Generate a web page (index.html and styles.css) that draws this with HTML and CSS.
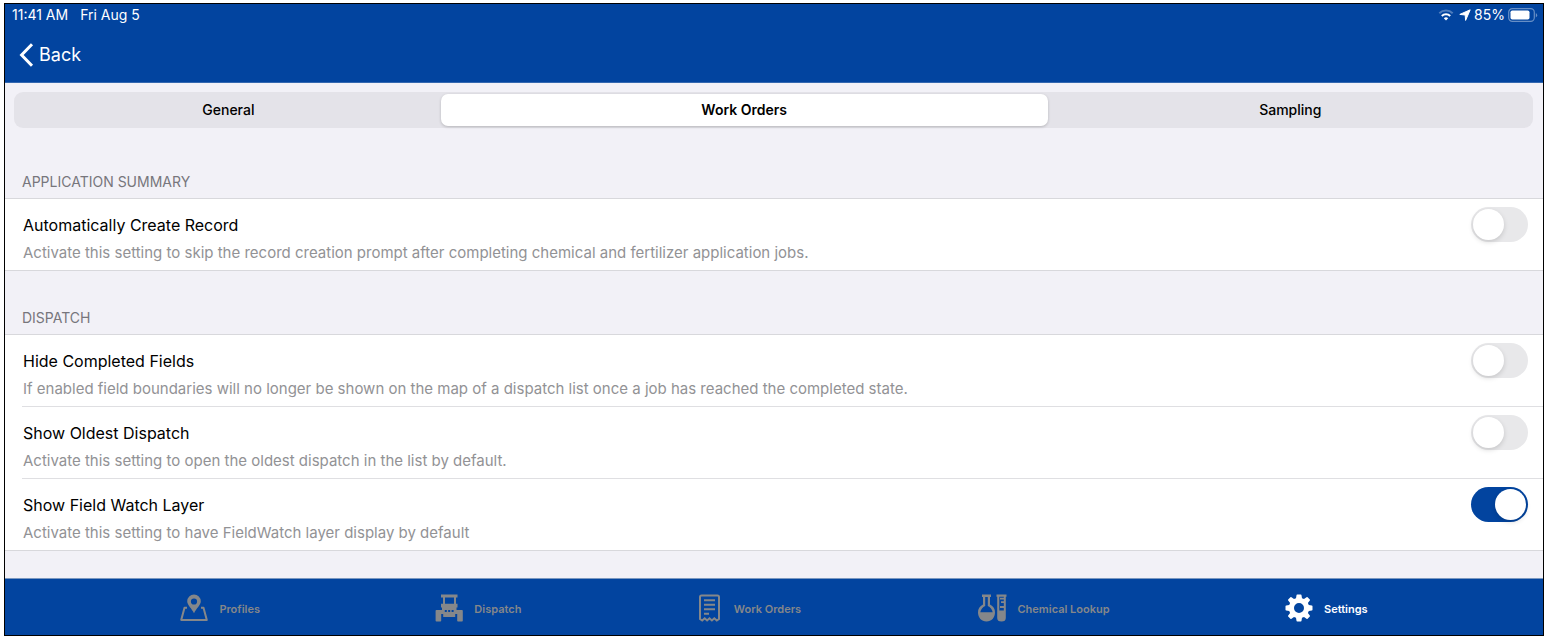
FILE: index.html
```html
<!DOCTYPE html>
<html lang="en">
<head>
    <meta charset="UTF-8">
    <meta name="viewport" content="width=device-width, initial-scale=1.0">
    <title>Settings - Work Orders</title>
    <link rel="stylesheet" href="styles.css">
</head>
<body>

    <div class="app">

        <!-- Status bar and back button -->
        <header class="header">
            <div class="status-bar">
                <div class="status-left">
                    <span>11:41 AM</span>
                    <span>Fri Aug 5</span>
                </div>
                <div class="status-right">
                    <svg class="wifi" width="16" height="12" viewBox="0 0 16 12" fill="none" stroke="#fff" stroke-width="2">
                        <path d="M1.3 4.2a9.6 9.6 0 0 1 13.4 0" stroke-opacity=".3"/>
                        <path d="M3.8 7a6 6 0 0 1 8.4 0"/>
                        <path d="M8 11.6 5.8 9.3a3.2 3.2 0 0 1 4.4 0z" fill="#fff" stroke="none"/>
                    </svg>
                    <svg width="12" height="12" viewBox="0 0 12 12" fill="#fff">
                        <path d="M11.2.8 6.6 11.4 6.2 6 .8 5.4z" stroke="#fff" stroke-linejoin="round"/>
                    </svg>
                    <span>85%</span>
                    <svg class="battery" width="30" height="14" viewBox="0 0 30 14">
                        <rect x=".7" y=".7" width="25.6" height="12.6" rx="3.6" fill="none" stroke="#fff" stroke-opacity=".4" stroke-width="1.2"/>
                        <rect x="2.5" y="2.5" width="19" height="9" rx="1.8" fill="#fff"/>
                        <path d="M27.8 5v4.4q1.4-.8 1.4-2.2t-1.4-2.2z" fill="#fff" fill-opacity=".4"/>
                    </svg>
                </div>
            </div>
            <button class="back" type="button">
                <svg width="15" height="24" viewBox="0 0 15 24" fill="none" stroke="#fff" stroke-width="3">
                    <path d="M13 1.2 2.6 12 13 22.8"/>
                </svg>
                Back
            </button>
        </header>

        <main class="content">
            <div class="tabs">
                <button type="button" class="tab">General</button>
                <button type="button" class="tab selected">Work Orders</button>
                <button type="button" class="tab">Sampling</button>
            </div>

            <h2 class="section-title">Application Summary</h2>
            <div class="list">
                <div class="row">
                    <label class="row-text" for="autoCreate">
                        <span class="row-title">Automatically Create Record</span>
                        <span class="row-info">Activate this setting to skip the record creation prompt after completing chemical and fertilizer application jobs.</span>
                    </label>
                    <input type="checkbox" class="switch" id="autoCreate">
                </div>
            </div>

            <h2 class="section-title">Dispatch</h2>
            <div class="list">
                <div class="row">
                    <label class="row-text" for="hideCompleted">
                        <span class="row-title">Hide Completed Fields</span>
                        <span class="row-info">If enabled field boundaries will no longer be shown on the map of a dispatch list once a job has reached the completed state.</span>
                    </label>
                    <input type="checkbox" class="switch" id="hideCompleted">
                </div>
                <div class="row">
                    <label class="row-text" for="showOldest">
                        <span class="row-title">Show Oldest Dispatch</span>
                        <span class="row-info">Activate this setting to open the oldest dispatch in the list by default.</span>
                    </label>
                    <input type="checkbox" class="switch" id="showOldest">
                </div>
                <div class="row">
                    <label class="row-text" for="fieldWatch">
                        <span class="row-title">Show Field Watch Layer</span>
                        <span class="row-info">Activate this setting to have FieldWatch layer display by default</span>
                    </label>
                    <input type="checkbox" class="switch" id="fieldWatch" checked>
                </div>
            </div>
        </main>

        <!-- Bottom navigation -->
        <nav class="nav">
            <a href="#" class="nav-item">
                <svg width="28" height="28" viewBox="0 0 28 28" fill="currentColor">
                    <path fill-rule="evenodd" d="M14 .5a6.8 6.8 0 0 0-6.8 6.8c0 3.8 4.6 7.2 6.8 12 2.2-4.800 6.800-8.200 6.800-12A6.800 6.800 0 0 0 14 .5zm0 3.900a3.100 3.100 0 1 1 0 6.200 3.100 3.100 0 0 1 0-6.200z"/>
                    <path d="M7 13.700H4.500L1.200 25.900h25.600L23.500 13.700H21" fill="none" stroke="currentColor" stroke-width="2" stroke-linejoin="round"/>
                </svg>
                Profiles
            </a>
            <a href="#" class="nav-item">
                <svg width="28" height="28" viewBox="0 0 28 28" fill="currentColor">
                    <path fill-rule="evenodd" d="M6 .5h16.500v3H21v6.300h1.500v3.700h-1v2.500H27q.8 0 .8.8v10q0 .8-.8.8h-4q-.8 0-.8-.8V20h-2v3H8.200v-3h-2v6.800q0 .8-.8.8h-4q-.8 0-.8-.8v-10q0-.8.8-.8H7v-2.500H6V9.800h2V3.500H6zM10 3.500v6.300h9V3.500zM9.800 16v2h2v-2zm3.400 0v2h2v-2zm3.400 0v2h2v-2z"/>
                </svg>
                Dispatch
            </a>
            <a href="#" class="nav-item">
                <svg width="26" height="28" viewBox="0 0 26 28" fill="none" stroke="currentColor" stroke-width="2">
                    <path d="M3 25V3q0-1.500 1.500-1.500h16Q22 1.500 22 3v22l-2.200 1.500-2.500-2.200-2.400 2.200-2.400-2.200-2.400 2.200-2.400-2.200L5.200 26.500z"/>
                    <path d="M7 6.200h11M7 10.700h11M7 15.200h11M7 19.700h5"/>
                </svg>
                Work Orders
            </a>
            <a href="#" class="nav-item">
                <svg width="30" height="28" viewBox="0 0 30 28" fill="currentColor">
                    <path fill-rule="evenodd" d="M5 .5h9v2.400h-1v7.600a8.800 8.800 0 0 1 5 8c0 5-3.500 9-8.500 9S1 23.500 1 18.500a8.800 8.800 0 0 1 5-8V2.900H5zM8.200 2.900v9.200c-2.500 1-4.400 3.300-4.900 6.200h12.400c-.5-2.900-2.400-5.200-4.900-6.200V2.900z"/>
                    <path fill-rule="evenodd" d="M19.500.5h10v2.200h-.7V24q0 3.500-4.300 3.500T20.200 24V2.700h-.7zM22.300 2.700v13.800h4.500V14H23v-2h3.800V9H24V7.200h2.800V5.500H23V3.700h3.800v-1z"/>
                </svg>
                Chemical Lookup
            </a>
            <a href="#" class="nav-item active">
                <svg width="28" height="28" viewBox="0 0 28 28" fill="currentColor">
                    <path fill-rule="evenodd" d="M11.500 1.200q0-.7.700-.7h3.600q.7 0 .7.700l.5 3 2 .9 2.500-1.900q.6-.4 1.100 0l2.200 2.200q.5.500 0 1.100L22.900 9l.9 2 3 .5q.7 0 .7.700v3.600q0 .7-.7.700l-3 .5-.9 2 1.900 2.500q.4.600 0 1.100l-2.200 2.200q-.5.500-1.100 0L19 22.900l-2 .9-.5 3q0 .7-.7.700h-3.600q-.7 0-.7-.7l-.5-3-2-.9-2.500 1.900q-.6.400-1.100 0l-2.200-2.200q-.5-.5 0-1.100L5.100 19l-.9-2-3-.5q-.7 0-.7-.7v-3.600q0-.7.700-.7l3-.5.900-2-1.900-2.500q-.4-.6 0-1.100l2.200-2.200q.5-.5 1.100 0L9 5.100l2-.9zM14 9a5 5 0 1 0 0 10 5 5 0 0 0 0-10z"/>
                </svg>
                Settings
            </a>
        </nav>

    </div>

</body>
</html>
```
FILE: styles.css
```css
* {
    box-sizing: border-box;
}
body {
    margin: 0;
    padding: 3px 3px 2px 4px;
    min-height: 100vh;
    display: flex;
    background-color: #fff;
    font-family: Inter, "Liberation Sans", sans-serif;
    font-size: 16px;
    line-height: 20px;
    color: #000;
}
button {
    border: none;
    background: none;
    font: inherit;
    color: inherit;
    cursor: pointer;
}
.app {
    flex: 1;
    display: flex;
    flex-direction: column;
    border: 1px solid #000;
    background-color: #f2f1f7;
}

/* Header */
.header {
    background-color: #02449f;
    color: #fff;
    padding-bottom: 15px;
    border-bottom: 1px solid #3468b0;
}
.status-bar {
    display: flex;
    justify-content: space-between;
    padding: 1px 5px 0 7px;
    font-size: 14px;
}
.status-left {
    display: flex;
    gap: 12px;
}
.status-right {
    display: flex;
    align-items: center;
    gap: 3px;
}
.wifi {
    margin-right: 2px;
}
.back {
    display: flex;
    align-items: center;
    gap: 5px;
    margin-top: 18px;
    padding: 0 14px;
    font-size: 18px;
    line-height: 24px;
}

/* Segmented tabs */
.content {
    flex: 1;
}
.tabs {
    display: grid;
    grid-template-columns: 7fr 10fr 8fr;
    margin: 9px 10px 0 9px;
    padding: 2px 0 2px 2px;
    border-radius: 9px;
    background-color: #e4e3e9;
}
.tab {
    height: 32px;
    padding: 0;
    border-radius: 7px;
    font-size: 14px;
    font-weight: 500;
}
.tab.selected {
    background-color: #fff;
    font-weight: 600;
    box-shadow: 0 1px 3px rgba(0, 0, 0, 0.2);
}

/* Setting lists */
.section-title {
    margin: 0;
    padding: 37px 17px 6px;
    font-size: 14px;
    font-weight: 400;
    text-transform: uppercase;
    color: #77767c;
}
.tabs + .section-title {
    padding-top: 44px;
}
.list {
    background-color: #fff;
    border-top: 1px solid #d8d8dc;
    border-bottom: 1px solid #d8d8dc;
}
.row {
    display: flex;
    align-items: flex-start;
    justify-content: space-between;
    gap: 16px;
    margin-left: 17px;
    padding: 8px 15px 7px 1px;
}
.row + .row {
    border-top: 1px solid #dfdfe2;
}
.row-text {
    display: flex;
    flex-direction: column;
    gap: 8px;
    padding-top: 8px;
}
.row-info {
    font-size: 15px;
    color: #929295;
}
.switch {
    appearance: none;
    flex: none;
    width: 57px;
    height: 35px;
    margin: 0;
    padding: 2px;
    border-radius: 18px;
    background-color: #e8e8ea;
    cursor: pointer;
}
.switch::before {
    content: "";
    display: block;
    width: 31px;
    height: 31px;
    border-radius: 50%;
    background-color: #fff;
    box-shadow: 0 2px 5px rgba(0, 0, 0, 0.15);
}
.switch:checked {
    background-color: #02449f;
}
.switch:checked::before {
    margin-left: auto;
}

/* Bottom navigation */
.nav {
    display: flex;
    justify-content: space-evenly;
    align-items: center;
    height: 57px;
    padding-top: 4px;
    border-top: 1px solid #7b98c0;
    background-color: #02449f;
}
.nav-item {
    display: flex;
    align-items: center;
    gap: 11px;
    font-size: 11px;
    font-weight: 600;
    text-decoration: none;
    color: #85878a;
}
.nav-item svg {
    margin-bottom: 2px;
}
.nav-item.active {
    color: #fff;
}
```
